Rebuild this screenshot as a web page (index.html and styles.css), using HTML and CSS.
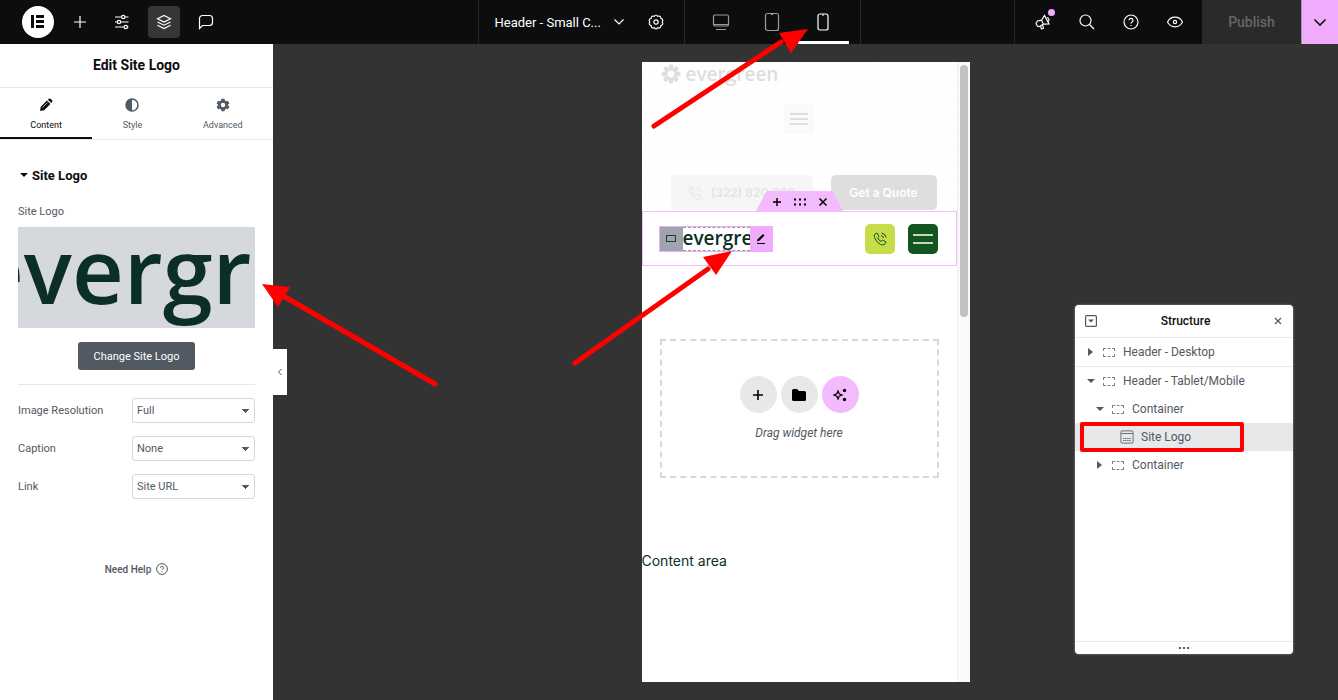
FILE: index.html
```html
<!DOCTYPE html>
<html lang="en">
<head>
  <meta charset="utf-8">
  <title>Edit Site Logo</title>
  <link rel="stylesheet" href="styles.css">
</head>
<body>

<!-- top bar -->
<header class="topbar">
  <div class="topbar-left">
    <button class="tool brand" aria-label="Menu">
      <svg width="32" height="32" viewBox="0 0 32 32"><circle cx="16" cy="16" r="16" fill="#fff"/><path d="M9 9h3v13H9zM14 9h8v3h-8zM14 14h8v3h-8zM14 19h8v3h-8z" fill="#0c0d0e"/></svg>
    </button>
    <button class="tool" aria-label="Add element">
      <svg width="14" height="14" viewBox="0 0 14 14"><path d="M7 1v12M1 7h12"/></svg>
    </button>
    <button class="tool" aria-label="Site settings">
      <svg width="16" height="16" viewBox="0 0 16 16"><path d="M1 3h6.500M11 3h3.500M1 8h2M7 8h7.500M1 13h9M13.500 13h1"/><circle cx="9.300" cy="3" r="1.700"/><circle cx="5" cy="8" r="1.700"/><circle cx="11.800" cy="13" r="1.700"/></svg>
    </button>
    <button class="tool active" aria-label="Structure">
      <svg width="16" height="16" viewBox="0 0 16 16"><path d="M8 1.500l6.500 3.300L8 8 1.500 4.800zM1.500 8L8 11.200 14.500 8M1.500 11.200L8 14.500l6.500-3.300"/></svg>
    </button>
    <button class="tool" aria-label="Notes">
      <svg width="16" height="16" viewBox="0 0 16 16"><path d="M1.500 14.500v-10a3 3 0 0 1 3-3h7a3 3 0 0 1 3 3v4a3 3 0 0 1-3 3H4.500z"/></svg>
    </button>
  </div>

  <div class="topbar-center">
    <div class="document">
      <button class="doc-name">Header - Small C...
        <svg width="12" height="12" viewBox="0 0 12 12"><path d="M1.500 3.500L6 8l4.500-4.500"/></svg>
      </button>
      <button class="tool" aria-label="Document settings">
        <svg width="16" height="16" viewBox="0 0 16 16"><path d="M6.300 2.300Q8-.300 9.700 2.300 12.700 1.400 12.800 4.300 15.800 5.200 14.200 8 15.800 10.800 12.800 11.700 12.700 14.600 9.700 13.700 8 16.300 6.300 13.700 3.300 14.600 3.200 11.700.200 10.800 1.800 8 .200 5.200 3.200 4.300 3.300 1.400 6.300 2.300z"/><circle cx="8" cy="8" r="2.200"/></svg>
      </button>
    </div>
    <div class="devices">
      <button class="device" aria-label="Desktop">
        <svg width="18" height="18" viewBox="0 0 18 18"><rect x="1.500" y="2" width="15" height="11" rx="1.500"/><path d="M2 11.500h14M4 16.500h10"/></svg>
      </button>
      <button class="device" aria-label="Tablet">
        <svg width="18" height="20" viewBox="0 0 18 20"><rect x="2.500" y="1.500" width="13" height="17" rx="2"/><path d="M8 2.500h2"/></svg>
      </button>
      <button class="device current" aria-label="Mobile">
        <svg width="18" height="20" viewBox="0 0 18 20"><rect x="4" y="2" width="10" height="16" rx="2"/><path d="M8 3h2"/></svg>
        <svg class="arrow arrow-device" width="160" height="102" viewBox="0 0 160 102"><path class="shaft" d="M5 98L132 14"/><path class="head" d="M159 1l-29 4 12 20z"/></svg>
      </button>
    </div>
  </div>

  <div class="topbar-right">
    <div class="actions">
      <button class="tool" aria-label="What's new">
        <svg width="16" height="16" viewBox="0 0 16 16"><path d="M1 9.500l1.500-2.500 4-.8 3-4.700L14 10l-5.500.2-4.500 2.500-1.500-.5zM6.500 6.200l2 4M5.500 12l1 3 2-.8-.8-3M12 3.500c2 .5 2.500 2.500 1.300 4"/></svg>
        <span class="dot"></span>
      </button>
      <button class="tool" aria-label="Finder">
        <svg width="16" height="16" viewBox="0 0 16 16"><circle cx="6.500" cy="6.500" r="5.500"/><path d="M10.500 10.500L15 15"/></svg>
      </button>
      <button class="tool" aria-label="Help">
        <svg width="16" height="16" viewBox="0 0 16 16"><circle cx="8" cy="8" r="7"/><path d="M6 6.300a2 2 0 1 1 2.800 1.900c-.6.300-.8.600-.8 1.300M8 11v1"/></svg>
      </button>
      <button class="tool" aria-label="Preview">
        <svg width="16" height="16" viewBox="0 0 16 16"><path d="M.500 8C3.500 1.500 12.500 1.500 15.500 8 12.500 14.500 3.500 14.500.500 8z"/><circle cx="8" cy="8" r="1.600"/></svg>
      </button>
    </div>
    <button class="publish" disabled>Publish</button>
    <button class="publish-more" aria-label="Save options">
      <svg width="14" height="14" viewBox="0 0 14 14"><path d="M1.500 4.500L7 10l5.500-5.500"/></svg>
    </button>
  </div>
</header>

<div class="workspace">

  <!-- widget settings -->
  <aside class="panel">
    <h1>Edit Site Logo</h1>
    <nav class="tabs">
      <button class="tab selected">
        <svg width="14" height="14" viewBox="0 0 14 14"><path d="M1 13l.8-4.200L8 2.600l3.400 3.400-6.200 6.200zM8.900 1.700l1-1q1-.6 2 .4l1 1q.9 1 .3 1.900l-1 1z"/><path d="M3.500 9.500l5-5" stroke="#fff" stroke-width=".7"/></svg>
        Content
      </button>
      <button class="tab">
        <svg width="14" height="14" viewBox="0 0 14 14"><circle cx="7" cy="7" r="6" fill="none" stroke="currentColor" stroke-width="1.500"/><path d="M7 1a6 6 0 0 0 0 12z"/></svg>
        Style
      </button>
      <button class="tab">
        <svg width="14" height="14" viewBox="0 0 14 14"><path fill-rule="evenodd" d="M5.500.8h3l.4 1.800 1.300.7 1.700-.6 1.500 2.600-1.300 1.200v1l1.300 1.200-1.500 2.600-1.700-.6-1.300.7-.4 1.800h-3l-.4-1.800-1.300-.7-1.700.6L.600 8.700l1.300-1.200v-1L.600 5.300l1.500-2.600 1.700.6 1.300-.7zM7 4.800a2.200 2.200 0 1 0 0 4.400 2.200 2.200 0 0 0 0-4.400z"/></svg>
        Advanced
      </button>
    </nav>

    <section class="controls">
      <h2><span class="caret-down"></span>Site Logo</h2>
      <p class="label">Site Logo</p>
      <div class="media">
        <div class="media-preview"><span>evergreen</span></div>
        <svg class="arrow arrow-media" width="178" height="106" viewBox="0 0 178 106"><path class="shaft" d="M174 101L24 14"/><path class="head" d="M1 1l28 3-12 20z"/></svg>
      </div>
      <button class="change">Change Site Logo</button>
      <div class="row">
        <label for="resolution">Image Resolution</label>
        <select id="resolution"><option>Full</option></select>
      </div>
      <div class="row">
        <label for="caption">Caption</label>
        <select id="caption"><option>None</option></select>
      </div>
      <div class="row">
        <label for="link">Link</label>
        <select id="link"><option>Site URL</option></select>
      </div>
    </section>

    <a class="help" href="#">Need Help
      <svg width="12" height="12" viewBox="0 0 12 12"><circle cx="6" cy="6" r="5.400"/><path d="M4.500 4.800a1.500 1.500 0 1 1 2.100 1.400c-.5.200-.6.500-.6.900M6 8.200v.9"/></svg>
    </a>
    <button class="collapse" aria-label="Hide panel">
      <svg width="6" height="8" viewBox="0 0 6 8"><path d="M4.500 1L1.500 4l3 3"/></svg>
    </button>
  </aside>

  <!-- mobile preview -->
  <main class="canvas">
    <div class="frame">
      <div class="page">
        <div class="desktop-header">
          <div class="ghost-logo">
            <svg width="20" height="20" viewBox="0 0 20 20"><g stroke="#dedede" stroke-width="4.500" stroke-linecap="round"><path d="M10 2.500v15M2.500 10h15M4.700 4.700l10.600 10.600M15.300 4.700L4.700 15.300"/></g><circle cx="10" cy="10" r="3.600" fill="#fdfdfd"/></svg>
            evergreen
          </div>
          <button class="ghost-menu" aria-label="Menu">
            <svg width="18" height="14" viewBox="0 0 18 14"><path d="M0 2h18M0 7h18M0 12h18" stroke="#dedede" stroke-width="2"/></svg>
          </button>
          <div class="ghost-buttons">
            <button class="ghost-phone">
              <svg width="14" height="14" viewBox="0 0 14 14"><path d="M1.500 2.500L4 1l2 3.500-1.400 1.200q1 2.500 3.500 3.800L9.500 8l3.500 2-1.500 2.500Q10 13.500 7.500 12.500 3 10 1.500 5.500 1 4 1.500 2.500zM8 3.500q2.300.3 2.500 2.500M8.500 1q4 .5 4.500 4.500"/></svg>
              (322) 820 000
            </button>
            <button class="ghost-quote">Get a Quote</button>
          </div>
        </div>

        <div class="mobile-header">
          <div class="handle">
            <button aria-label="Add container"><svg width="10" height="10" viewBox="0 0 10 10"><path d="M5 1v8M1 5h8"/></svg></button>
            <button aria-label="Edit container"><svg width="14" height="8" viewBox="0 0 14 8"><path d="M1 1.500h2M6 1.500h2M11 1.500h2M1 6.500h2M6 6.500h2M11 6.500h2" stroke-width="2"/></svg></button>
            <button aria-label="Delete container"><svg width="10" height="10" viewBox="0 0 10 10"><path d="M1.500 1.500l7 7M8.500 1.500l-7 7"/></svg></button>
          </div>
          <div class="widget">
            <span class="widget-icon"><svg width="12" height="10" viewBox="0 0 12 10"><rect x="1.500" y="1.500" width="9" height="6" fill="none" stroke="#333"/></svg></span>
            <span class="widget-logo">evergreen</span>
            <button class="widget-edit" aria-label="Edit Site Logo"><svg width="12" height="12" viewBox="0 0 12 12"><path d="M2 8.500l.6-2.300L8 .9l1.500 1.500-5.200 5.400z" fill="#000"/><path d="M2 10.500h8" stroke="#000"/></svg></button>
            <svg class="arrow arrow-widget" width="164" height="118" viewBox="0 0 164 118"><path class="shaft" d="M5 113L138 19"/><path class="head" d="M162 1l-29 6 13 18z"/></svg>
          </div>
          <button class="call" aria-label="Call">
            <svg width="14" height="14" viewBox="0 0 14 14"><path d="M1.500 2.500L4 1l2 3.500-1.400 1.200q1 2.500 3.500 3.800L9.500 8l3.500 2-1.500 2.500Q10 13.500 7.500 12.500 3 10 1.500 5.500 1 4 1.500 2.500zM8 3.500q2.300.3 2.500 2.500M8.500 1q4 .5 4.500 4.500"/></svg>
          </button>
          <button class="menu" aria-label="Open menu">
            <svg width="20" height="12" viewBox="0 0 20 12"><path d="M0 2h20M0 10h20" stroke="#fff" stroke-width="1.300"/></svg>
          </button>
        </div>

        <div class="dropzone">
          <div class="dropzone-buttons">
            <button aria-label="Add container"><svg width="12" height="12" viewBox="0 0 12 12"><path d="M6 1v10M1 6h10" stroke="#000" stroke-width="1.600"/></svg></button>
            <button aria-label="Add template"><svg width="14" height="12" viewBox="0 0 14 12"><path d="M0 1.500Q0 0 1.500 0H5l2 2h5.500Q14 2 14 3.500v7q0 1.500-1.500 1.500h-11Q0 12 0 10.500z"/></svg></button>
            <button class="ai" aria-label="Build with AI"><svg width="14" height="14" viewBox="0 0 14 14"><path d="M5 3l1.200 2.800L9 7 6.200 8.200 5 11 3.800 8.200 1 7l2.800-1.200z" fill="none" stroke="#000" stroke-width="1.200"/><circle cx="11.500" cy="2.500" r="1.700"/><circle cx="11.500" cy="11.500" r="1.700"/></svg></button>
          </div>
          <p>Drag widget here</p>
        </div>

        <p class="content-area">Content area</p>
      </div>
      <div class="scrollbar"><div class="thumb"></div></div>
    </div>
  </main>

  <!-- structure navigator -->
  <div class="navigator">
    <div class="nav-head">
      <button aria-label="Expand all"><svg width="12" height="12" viewBox="0 0 12 12"><rect x=".6" y=".6" width="10.800" height="10.800" rx="1" fill="none" stroke="#515962" stroke-width="1.200"/><path d="M3 4.500h6L6 7.500z" fill="#515962"/></svg></button>
      <h2>Structure</h2>
      <button aria-label="Close"><svg width="8" height="8" viewBox="0 0 8 8"><path d="M1 1l6 6M7 1L1 7" stroke="#515962" stroke-width="1.200"/></svg></button>
    </div>
    <ul class="tree">
      <li class="item top"><span class="caret-right"></span><span class="box"></span>Header - Desktop</li>
      <li class="item top"><span class="caret-down"></span><span class="box"></span>Header - Tablet/Mobile</li>
      <li class="item level-2"><span class="caret-down"></span><span class="box"></span>Container</li>
      <li class="item level-3 selected">
        <svg width="14" height="14" viewBox="0 0 14 14"><rect x=".9" y=".9" width="12.200" height="12.200" rx="1" fill="none" stroke="#6b727a"/><path d="M1 3.500h12" stroke="#6b727a"/><path d="M3 8.500h8M3 10.500h8" stroke="#6b727a" stroke-dasharray="1.500 .6"/></svg>
        Site Logo
        <span class="highlight"></span>
      </li>
      <li class="item level-2"><span class="caret-right"></span><span class="box"></span>Container</li>
    </ul>
    <div class="nav-foot"><svg width="10" height="2" viewBox="0 0 10 2"><path d="M0 1h2M4 1h2M8 1h2" stroke="#515962" stroke-width="2"/></svg></div>
  </div>
</div>

</body>
</html>
```

FILE: styles.css
```css
* { box-sizing: border-box; }
body { margin: 0; height: 100vh; display: flex; flex-direction: column; overflow: hidden; font-family: Roboto, Arial, sans-serif; font-size: 12px; color: #515962; background: #333; }
h1, h2, p, ul { margin: 0; padding: 0; }
button { margin: 0; padding: 0; border: 0; background: none; font-family: inherit; color: inherit; }
button, .handle, .widget-icon { display: flex; align-items: center; justify-content: center; }
svg { display: block; flex: none; }

/* top bar */
.topbar { display: grid; grid-template-columns: 1fr auto 1fr; height: 44px; flex: none; background: #0c0d0e; color: #fff; }
.topbar svg { fill: none; stroke: currentColor; stroke-width: 1.2; }
.topbar .brand svg { stroke: none; }
.topbar-left { display: flex; align-items: center; gap: 10px; padding-left: 22px; }
.tool { position: relative; width: 32px; height: 32px; border-radius: 4px; }
.tool.active { background: #343638; }
.topbar-center { display: flex; border-left: 1px solid #26282a; border-right: 1px solid #26282a; }
.document { display: flex; align-items: center; gap: 15px; width: 206px; padding-left: 16px; border-right: 1px solid #26282a; }
.doc-name { gap: 12px; font-size: 13px; }
.devices { display: flex; padding: 0 11px; }
.device { position: relative; width: 51px; color: #9a9c9e; border-bottom: 3px solid transparent; padding-top: 3px; }
.device.current { color: #fff; border-bottom-color: #fff; }
.topbar-right { display: flex; justify-content: flex-end; }
.actions { display: flex; align-items: center; gap: 12px; padding: 0 11px 0 12px; border-left: 1px solid #26282a; }
.dot { position: absolute; top: 3px; right: 4px; width: 7px; height: 7px; border-radius: 50%; background: #f0abfc; }
.publish { width: 99px; background: #2a2a2a; color: #666; font-size: 14px; font-weight: 500; }
.publish-more { width: 37px; background: #f0abfc; border-left: 1px solid #999; color: #0c0d0e; }
.topbar .publish-more svg { stroke-width: 1.6; }

/* red pointers */
.arrow { position: absolute; z-index: 10; pointer-events: none; }
.topbar .arrow .shaft, .arrow .shaft { fill: none; stroke: #f00; stroke-width: 5; stroke-linecap: round; }
.topbar .arrow .head, .arrow .head { fill: #f00; stroke: none; }
.arrow-device { top: 28px; right: 40px; }
.arrow-media { top: 56px; left: 243px; }
.arrow-widget { top: 23px; right: 38px; }

/* left panel */
.workspace { position: relative; flex: 1; display: flex; min-height: 0; }
.panel { position: relative; width: 273px; flex: none; background: #fff; }
.panel h1 { height: 44px; line-height: 43px; text-align: center; font-size: 14px; font-weight: 700; color: #0c0d0e; border-bottom: 1px solid #e6e8ea; }
.tabs { display: flex; height: 52px; border-bottom: 1px solid #e6e8ea; }
.tab { flex: 1 1 auto; flex-direction: column; gap: 7px; padding-top: 4px; font-size: 9px; line-height: 12px; border-bottom: 2px solid transparent; color: #515962; }
.tab svg { fill: currentColor; }
.tab.selected { color: #0c0d0e; border-bottom-color: #0c0d0e; }
.controls { padding: 26px 18px 0; }
.controls h2 { display: flex; align-items: center; gap: 4px; height: 18px; padding-left: 2px; font-size: 13px; font-weight: 700; color: #0c0d0e; }
.caret-down { border: 4px solid transparent; border-top-color: currentColor; border-bottom: 0; }
.caret-right { border: 4px solid transparent; border-left: 5px solid currentColor; border-right: 0; margin: 0 2px 0 1px; }
.label { margin-top: 18px; line-height: 20px; font-size: 11px; }
.media { position: relative; margin-top: 5px; }
.media-preview { height: 101px; overflow: hidden; background: #d5d8dc; }
.media-preview span { display: block; margin-left: -46px; font: 600 90px/84px "Open Sans", sans-serif; color: #0b2f26; white-space: nowrap; }
.change { width: 117px; height: 28px; margin: 14px auto; background: #515962; color: #fff; border-radius: 3px; font-size: 11px; }
.row { display: flex; align-items: center; justify-content: space-between; margin-bottom: 13px; }
.change + .row { border-top: 1px solid #e6e8ea; padding-top: 13px; }
.row label { font-size: 11px; }
.row select { width: 123px; height: 25px; padding: 0 4px; border: 1px solid #d5d8dc; border-radius: 3px; appearance: none; font: 11px Roboto, Arial, sans-serif; color: #515962; background: linear-gradient(to bottom left, #515962 50%, transparent 50%) right 8px center / 4px 4px no-repeat, linear-gradient(to bottom right, #515962 50%, transparent 50%) right 4px center / 4px 4px no-repeat, #fff; }
.help { display: flex; justify-content: center; align-items: center; gap: 5px; margin-top: 64px; font-size: 10px; font-weight: 500; color: #515962; text-decoration: none; }
.help svg, .collapse svg { fill: none; stroke: currentColor; }
.collapse { position: absolute; left: 100%; top: 305px; width: 14px; height: 46px; background: #fff; }

/* preview */
.canvas { flex: 1; display: flex; justify-content: center; padding: 18px 0; }
.frame { display: flex; width: 328px; background: #fff; }
.page { flex: 1; font-family: Inter, "Open Sans", sans-serif; color: #0b2f26; }
.desktop-header { height: 149px; padding: 0 19px; background: repeating-linear-gradient(125deg, #fff 0, #fff 6px, #fdfdfd 6px, #fdfdfd 9px); }
.ghost-logo { display: flex; align-items: center; gap: 5px; height: 24px; font-family: "Open Sans", sans-serif; font-size: 19px; font-weight: 600; color: #dedede; }
.ghost-menu { width: 30px; height: 30px; margin: 18px auto 0; background: #fafafa; }
.ghost-buttons { display: flex; gap: 18px; margin-top: 41px; padding-left: 10px; }
.ghost-buttons button { height: 35px; border-radius: 5px; font-size: 12px; font-weight: 600; white-space: nowrap; }
.ghost-phone { width: 142px; gap: 9px; background: #f6f6f6; color: #e4e4e4; }
.ghost-phone svg, .call svg { fill: none; stroke: currentColor; }
.ghost-quote { width: 106px; background: #dedede; color: #fff; }
.mobile-header { position: relative; display: flex; align-items: center; height: 55px; padding: 0 18px 0 16px; border: 1px solid #f3bafd; }
.handle { position: absolute; left: 113px; top: -21px; gap: 11px; width: 88px; height: 21px; background: #f3bafd; clip-path: polygon(11px 0, 77px 0, 100% 100%, 0 100%); }
.handle svg { stroke: #000; stroke-width: 1.5; }
.widget { position: relative; display: flex; height: 26px; width: 114px; margin-right: auto; border: 1px solid #f0abfc; }
.widget-icon { width: 23px; background: #9da5ae; }
.widget-logo { flex: 1; overflow: hidden; border-top: 1px dashed #999; border-bottom: 1px dashed #999; font-family: "Open Sans", sans-serif; font-size: 19px; font-weight: 600; line-height: 21px; }
.widget-edit { width: 22px; background: #f0abfc; }
.call, .menu { width: 30px; height: 30px; border-radius: 5px; }
.call { background: #c8dc4a; color: #12551f; margin-right: 13px; }
.menu { background: #12551f; }
.dropzone { display: flex; flex-direction: column; align-items: center; justify-content: center; gap: 12px; height: 139px; margin: 73px 18px 0; border: 2px dashed #d5d8dc; }
.dropzone-buttons { display: flex; gap: 4px; }
.dropzone-buttons button { width: 37px; height: 37px; border-radius: 50%; background: #e6e8ea; }
.dropzone-buttons .ai { background: #f3bafd; }
.dropzone p { font: italic 12px/16px Roboto, Arial, sans-serif; color: #515962; }
.content-area { margin-top: 73px; font-size: 14px; line-height: 20px; }
.scrollbar { width: 13px; padding: 3px 2px 3px 2px; background: #fafafa; border-left: 1px solid #ededed; }
.thumb { width: 8px; height: 252px; border-radius: 4px; background: #c1c1c1; }

/* navigator */
.navigator { position: absolute; right: 45px; top: 261px; display: flex; flex-direction: column; width: 218px; height: 349px; background: #fff; border-radius: 4px; box-shadow: 0 0 2px #aaa; }
.nav-head { display: flex; align-items: center; justify-content: space-between; height: 33px; padding: 0 11px 0 10px; border-bottom: 1px solid #e6e8ea; }
.nav-head h2 { font-size: 12px; font-weight: 500; color: #0c0d0e; }
.tree { flex: 1; list-style: none; }
.item { position: relative; display: flex; align-items: center; gap: 7px; height: 28px; padding-left: 12px; }
.item.top:first-child { height: 29px; border-bottom: 1px solid #e6e8ea; }
.box { width: 12px; height: 9px; border: 1px dashed #7a8188; margin: 0 1px; }
.level-2 { padding-left: 21px; }
.level-3 { padding-left: 45px; }
.item.selected { background: #e6e8ea; }
.highlight { position: absolute; left: 5px; top: -1px; width: 164px; height: 30px; border: 4px solid #f00; border-radius: 2px; }
.nav-foot { display: flex; align-items: center; justify-content: center; height: 13px; border-top: 1px solid #e6e8ea; }
```
